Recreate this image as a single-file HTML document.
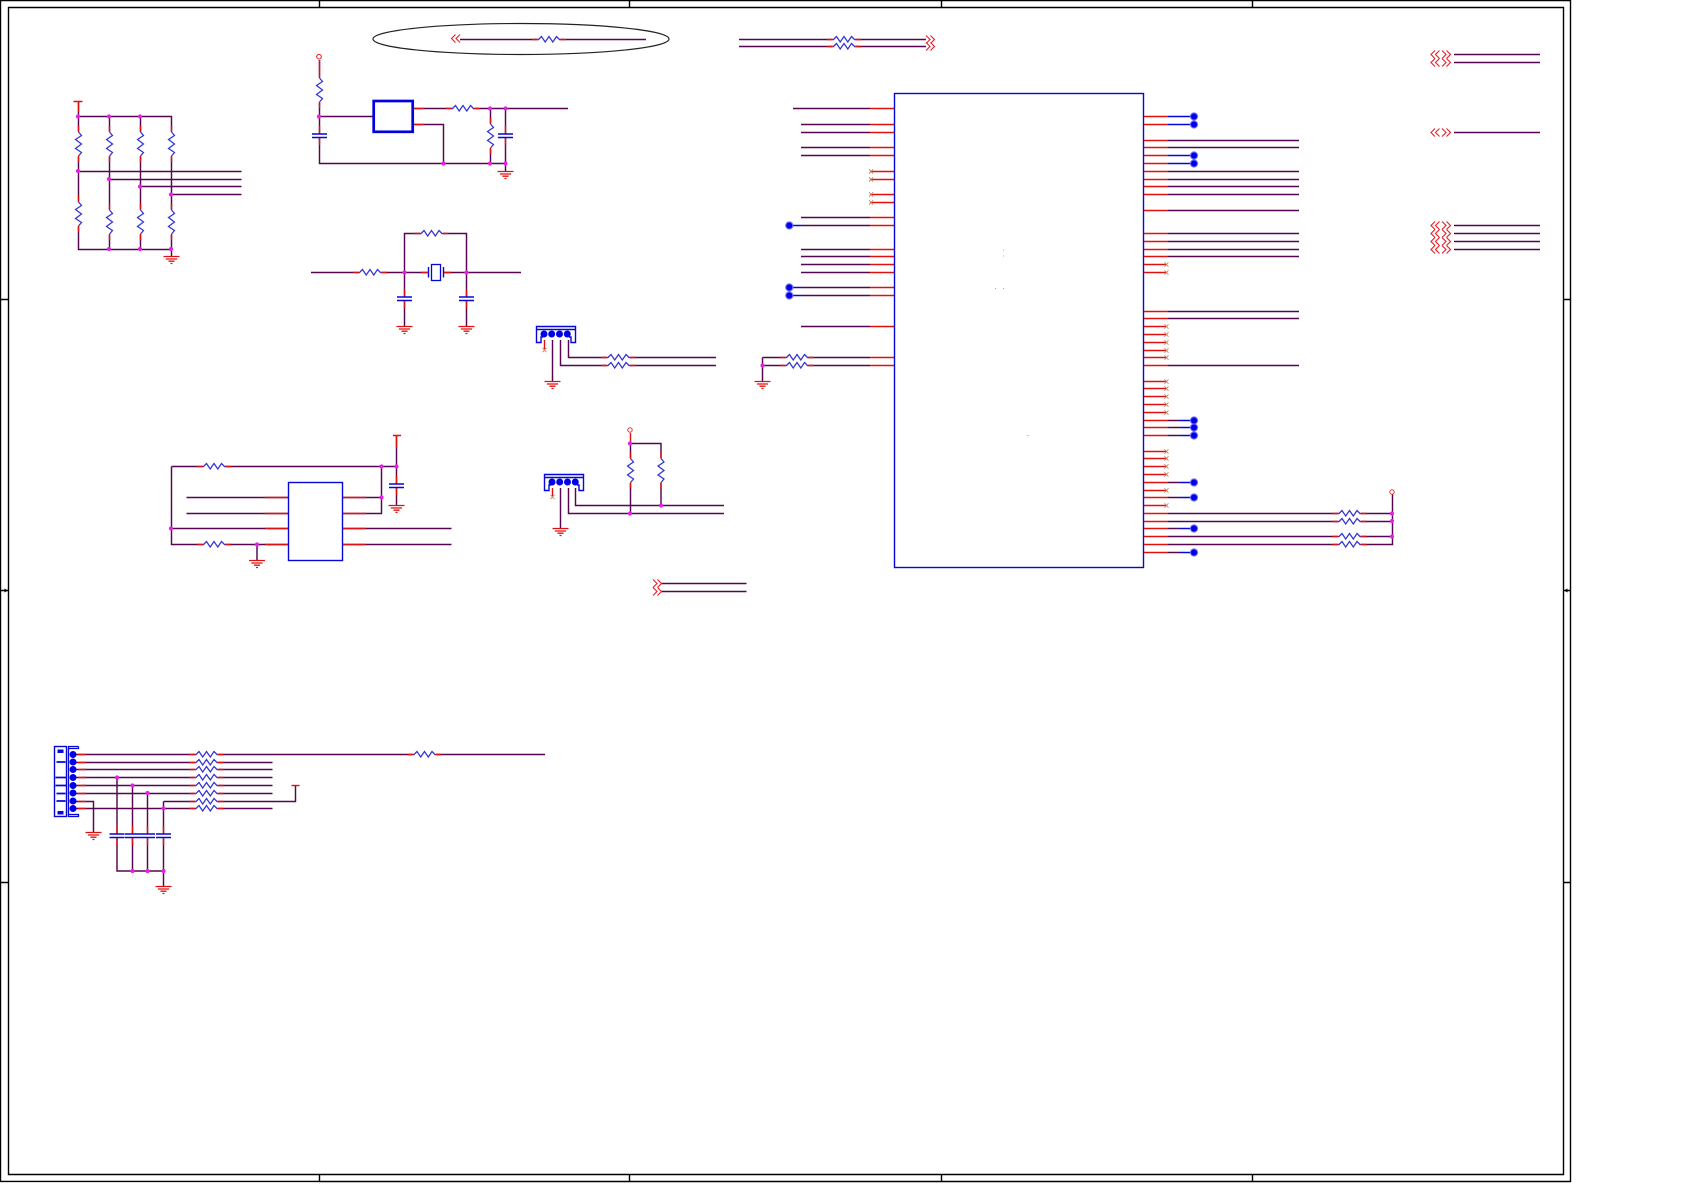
<!DOCTYPE html>
<html lang="en">
<head>
<meta charset="utf-8">
<title>Schematic</title>
<style>
html,body{margin:0;padding:0;background:#fff;width:1684px;height:1190px;overflow:hidden}
svg{display:block}
.f{fill:none;stroke:#000;stroke-width:1.4}
.w{fill:none;stroke:#560650;stroke-width:1.45}
.r{fill:none;stroke:#e01010;stroke-width:1.4}
.b{fill:none;stroke:#0606d8;stroke-width:1.4}
.z{fill:none;stroke:#3434d4;stroke-width:1.25}
.ch{fill:none;stroke:#e8242c;stroke-width:1.15}
.x{fill:none;stroke:#c08060;stroke-width:.8}
.n{fill:#e61ee6}
</style>
</head>
<body>
<svg width="1684" height="1190" viewBox="0 0 1684 1190" xmlns="http://www.w3.org/2000/svg">
<defs>
<g id="rh">
  <rect x="-.5" y="-2" width="23" height="4" fill="#fff"/>
  <path class="r" d="M-6 0H0M22 0H28"/>
  <path class="z" d="M0 .5L3.5-3L7.2 2.5L11-3L14.8 2.5L18.5-3L22 .5"/>
</g>
<g id="rv">
  <rect x="-2" y="-.5" width="4" height="25" fill="#fff"/>
  <path class="r" d="M0-6V0M0 24V30"/>
  <path class="z" d="M0 0L3 3.5L-3 7.5L3 12L-3 16.5L3 20.5L0 24"/>
</g>
<g id="cp">
  <rect x="-2" y="0" width="4" height="3.5" fill="#fff"/>
  <path class="r" d="M0-8V0M0 3.5V11"/>
  <path d="M-7.5 0H7.5M-7.5 3.5H7.5" fill="none" stroke="#0606d8" stroke-width="1.4"/>
</g>
<g id="gd">
  <path d="M-8 .5H8M-5.6 3H5.6M-3 5.2H3M-1 7.5H1" fill="none" stroke="#e01010" stroke-width="1.3"/>
</g>
<g id="al"><path class="ch" d="M4-4L0 0L4 4M8.5-4L4.5 0L8.5 4"/></g>
<g id="ar"><path class="ch" d="M0-4L4 0L0 4M4.5-4L8.5 0L4.5 4"/></g>
<g id="dt"><circle r="4.1" fill="#6a6aff"/><circle r="3" fill="#0000e6"/></g>
<g id="nx"><path class="x" d="M-2-2.2L2 2.2M-2 2.2L2-2.2"/></g>
<g id="cn">
  <path d="M.5 3.5V.5H39.5V3.5H.5M.5 3.5V16.5H5V11H7M39.5 3.500V16.500H35V11H33" fill="none" stroke="#0606d8" stroke-width="1.4"/>
  <circle cx="8" cy="8" r="3.5" fill="#0000e6"/><circle cx="15.7" cy="8" r="3.5" fill="#0000e6"/><circle cx="23.5" cy="8" r="3.5" fill="#0000e6"/><circle cx="31.3" cy="8" r="3.5" fill="#0000e6"/>
</g>
</defs>

<!-- frame -->
<path class="f" d="M.5 .5H1570.5V1181.5H.5ZM8.5 7.5H1563.5V1174.5H8.5Z"/>
<path class="f" d="M319.500 0V7.500M629.500 0V7.500M941.500 0V7.500M1252.500 0V7.500M319.500 1174.500V1181.500M629.500 1174.500V1181.500M941.500 1174.500V1181.500M1252.500 1174.500V1181.500M0 299.500H8.500M0 590.500H8.500M0 882.500H8.500M1563.500 299.500H1570.500M1563.500 590.500H1570.500M1563.500 882.500H1570.500"/>
<path d="M8 590.500L4.500 588.500V592.500ZM1564 590.500L1567.500 588.500V592.500Z" fill="#000"/>
<path d="M0 1182.500H319.500V1184" fill="none" stroke="#ddd" stroke-width="1"/>

<!-- ellipse group -->
<ellipse cx="521" cy="39" rx="148" ry="15.500" fill="none" stroke="#222" stroke-width="1.200"/>
<path class="w" d="M460 39.500H646"/>
<use href="#rh" x="538" y="39.500"/>
<use href="#al" x="451.500" y="38.500"/>
<path class="w" d="M739 39.500H926M739 46.500H926"/>
<use href="#rh" x="833" y="39.500"/><use href="#rh" x="833" y="46.500"/>
<use href="#ar" x="926" y="39.500"/><use href="#ar" x="926" y="46.500"/>

<!-- resistor dividers -->
<path class="w" d="M78.500 102V249.500H171.500V256M78.500 116.500H171.500V249.500M109.500 116.500V249.500M140.500 116.500V249.500M78.500 171.500H241.500M109.500 179.500H241.500M140.500 186.500H241.500M171.500 194.500H241.500"/>
<path class="r" d="M73.500 101.500H82.500M78.500 101.500V112"/>
<use href="#rv" x="78.500" y="132"/><use href="#rv" x="109.500" y="132"/><use href="#rv" x="140.500" y="132"/><use href="#rv" x="171.500" y="132"/>
<use href="#rv" x="78.500" y="202"/><use href="#rv" x="109.500" y="210"/><use href="#rv" x="140.500" y="210"/><use href="#rv" x="171.500" y="210"/>
<use href="#gd" x="171.500" y="256"/>
<g class="n"><circle cx="78" cy="116.500" r="2.100"/><circle cx="109" cy="116.500" r="2.100"/><circle cx="140" cy="116.500" r="2.100"/><circle cx="78" cy="171" r="2.100"/><circle cx="109" cy="179" r="2.100"/><circle cx="140" cy="186.500" r="2.100"/><circle cx="171" cy="194.500" r="2.100"/><circle cx="109" cy="249" r="2.100"/><circle cx="140" cy="249" r="2.100"/><circle cx="171" cy="249" r="2.100"/></g>

<!-- regulator -->
<path class="w" d="M319.500 60V163.500H505.500V171M319.500 116.500H373M413 108.500H568M413 124.500H443.500V163.500M490.500 108.500V163.500M505.500 108.500V163.500"/>
<path class="r" d="M319.500 60V72"/>
<circle cx="319" cy="56.700" r="2.300" fill="#fff" stroke="#e01010" stroke-width="1"/>
<rect x="373.700" y="101" width="39" height="30.800" fill="#fff" stroke="#0000e0" stroke-width="2.700"/>
<path class="r" d="M414.500 108.500H424M414.500 124.500H424"/>
<use href="#rh" x="452" y="108.500"/>
<use href="#rv" x="319.500" y="78"/>
<use href="#rv" x="490.500" y="124"/>
<use href="#cp" x="319.500" y="134"/>
<use href="#cp" x="505.500" y="134"/>
<use href="#gd" x="505.500" y="171"/>
<g class="n"><circle cx="319" cy="116.500" r="2.100"/><circle cx="490" cy="108.500" r="2.100"/><circle cx="505.500" cy="108.500" r="2.100"/><circle cx="443.500" cy="163.500" r="2.100"/><circle cx="490" cy="163.500" r="2.100"/><circle cx="505.500" cy="163.500" r="2.100"/></g>

<!-- crystal -->
<path class="w" d="M311 272.500H428M443 272.500H521M404.500 272.500V233.500H466.500V326M404.500 272.500V326"/>
<use href="#rh" x="359" y="272.500"/>
<use href="#rh" x="420.500" y="233.500"/>
<rect x="431.500" y="264.500" width="9" height="16" fill="#fff" stroke="#0606d8" stroke-width="1.300"/>
<path class="b" d="M428.500 267V277.500M443.500 267V277.500"/>
<path class="r" d="M421 272.500H428M444 272.500H451"/>
<use href="#cp" x="404.500" y="297"/><use href="#cp" x="466.500" y="297"/>
<use href="#gd" x="404.500" y="326"/><use href="#gd" x="466.500" y="326"/>
<g class="n"><circle cx="404.500" cy="272.500" r="2.100"/><circle cx="466.500" cy="272.500" r="2.100"/></g>

<!-- connector 1 -->
<path class="w" d="M568.500 340V357.500H716M560.500 340V365.500H716M552.500 340V381"/>
<path class="r" d="M544.500 340V349"/>
<use href="#nx" x="544.500" y="350"/>
<use href="#cn" x="536" y="326"/>
<use href="#rh" x="607.500" y="357.500"/><use href="#rh" x="607.500" y="365.500"/>
<use href="#gd" x="552.500" y="381"/>

<!-- IC left group -->
<path class="w" d="M793 108.500H870M801 124.500H870M801 132.500H870M801 147.500H870M801 155.500H870M801 217.500H870M801 225.500H870M801 249.500H870M801 256.500H870M801 264.500H870M801 272.500H870M801 287.500H870M801 295.500H870M801 326.500H870M762.500 357.500H870M762.500 365.500H870M762.500 357.500V381"/>
<path class="b" d="M789 225.500H801M789 287.500H801M789 295.500H801"/>
<path class="r" d="M870 108.500H894M870 124.500H894M870 132.500H894M870 147.500H894M870 155.500H894M870 171.500H894M870 179.500H894M870 194.500H894M870 202.500H894M870 217.500H894M870 225.500H894M870 249.500H894M870 256.500H894M870 264.500H894M870 272.500H894M870 287.500H894M870 295.500H894M870 326.500H894M870 357.500H894M870 365.500H894"/>
<use href="#nx" x="871" y="171.500"/><use href="#nx" x="871" y="179.500"/><use href="#nx" x="871" y="194.500"/><use href="#nx" x="871" y="202.500"/>
<use href="#dt" x="789.300" y="225.500"/><use href="#dt" x="789.300" y="287.500"/><use href="#dt" x="789.300" y="295.500"/>
<use href="#rh" x="786" y="357.500"/><use href="#rh" x="786" y="365.500"/>
<use href="#gd" x="762.500" y="381"/>
<circle class="n" cx="762.500" cy="365.500" r="2.100"/>

<!-- IC body -->
<rect x="894.500" y="93.500" width="249" height="474" fill="none" stroke="#0606d8" stroke-width="1.400"/>
<path d="M1003.500 249.500v1M1003.500 255.500v1M995.500 288v1M1003.500 288v1M1027 435.500h1.500" stroke="#999" stroke-width=".8" fill="none"/>

<!-- IC right group -->
<path class="w" d="M1168 140.500H1299M1168 147.500H1299M1168 171.500H1299M1168 179.500H1299M1168 186.500H1299M1168 194.500H1299M1168 210.500H1299M1168 233.500H1299M1168 241.500H1299M1168 249.500H1299M1168 256.500H1299M1168 311.500H1299M1168 318.500H1299M1168 365.500H1299M1168 513.500H1392.500M1168 521.500H1392.500M1168 536.500H1392.500M1168 544.500H1392.500V492"/>
<path class="w" d="M1168 420.500H1180M1168 427.500H1180M1168 435.500H1180M1168 482.500H1180M1168 497.500H1180M1168 528.500H1180M1168 552.500H1180"/>
<path class="b" d="M1168 116.500H1194M1168 124.500H1194M1168 155.500H1194M1168 163.500H1194M1180 420.500H1194M1180 427.500H1194M1180 435.500H1194M1180 482.500H1194M1180 497.500H1194M1180 528.500H1194M1180 552.500H1194"/>
<path class="r" d="M1144 116.500H1168M1144 124.500H1168M1144 140.500H1168M1144 147.500H1168M1144 155.500H1168M1144 163.500H1168M1144 171.500H1168M1144 179.500H1168M1144 186.500H1168M1144 194.500H1168M1144 210.500H1168M1144 233.500H1168M1144 241.500H1168M1144 249.500H1168M1144 256.500H1168M1144 264.500H1166M1144 272.500H1166M1144 311.500H1168M1144 318.500H1168M1144 326.500H1166M1144 334.500H1166M1144 342.500H1166M1144 350.500H1166M1144 357.500H1166M1144 365.500H1168M1144 381.500H1166M1144 388.500H1166M1144 396.500H1166M1144 404.500H1166M1144 412.500H1166M1144 420.500H1168M1144 427.500H1168M1144 435.500H1168M1144 451.500H1166M1144 458.500H1166M1144 466.500H1166M1144 474.500H1166M1144 482.500H1168M1144 490.500H1166M1144 497.500H1168M1144 505.500H1166M1144 513.500H1168M1144 521.500H1168M1144 528.500H1168M1144 536.500H1168M1144 544.500H1168M1144 552.500H1168"/>
<use href="#nx" x="1166.500" y="264.500"/><use href="#nx" x="1166.500" y="272.500"/><use href="#nx" x="1166.500" y="326.500"/><use href="#nx" x="1166.500" y="334.500"/><use href="#nx" x="1166.500" y="342.500"/><use href="#nx" x="1166.500" y="350.500"/><use href="#nx" x="1166.500" y="357.500"/><use href="#nx" x="1166.500" y="381.500"/><use href="#nx" x="1166.500" y="388.500"/><use href="#nx" x="1166.500" y="396.500"/><use href="#nx" x="1166.500" y="404.500"/><use href="#nx" x="1166.500" y="412.500"/><use href="#nx" x="1166.500" y="451.500"/><use href="#nx" x="1166.500" y="458.500"/><use href="#nx" x="1166.500" y="466.500"/><use href="#nx" x="1166.500" y="474.500"/><use href="#nx" x="1166.500" y="490.500"/><use href="#nx" x="1166.500" y="505.500"/>
<use href="#dt" x="1194" y="116.500"/><use href="#dt" x="1194" y="124.500"/><use href="#dt" x="1194" y="155.500"/><use href="#dt" x="1194" y="163.500"/><use href="#dt" x="1194" y="420.500"/><use href="#dt" x="1194" y="427.500"/><use href="#dt" x="1194" y="435.500"/><use href="#dt" x="1194" y="482.500"/><use href="#dt" x="1194" y="497.500"/><use href="#dt" x="1194" y="528.500"/><use href="#dt" x="1194" y="552.500"/>
<use href="#rh" x="1338.500" y="513.500"/><use href="#rh" x="1338.500" y="521.500"/><use href="#rh" x="1338.500" y="536.500"/><use href="#rh" x="1338.500" y="544.500"/>
<circle cx="1392" cy="492" r="2.200" fill="#fff" stroke="#e8343c" stroke-width="1"/>
<g class="n"><circle cx="1392" cy="513.500" r="2.100"/><circle cx="1392" cy="521" r="2.100"/><circle cx="1392" cy="536.500" r="2.100"/></g>

<!-- far-right connectors -->
<path class="w" d="M1454 54.500H1540M1454 62.500H1540M1454 132.500H1540M1454 225.500H1540M1454 233.500H1540M1454 241.500H1540M1454 249.500H1540"/>
<use href="#al" x="1431" y="54.500"/><use href="#al" x="1431" y="62.500"/><use href="#ar" x="1442" y="54.500"/><use href="#ar" x="1442" y="62.500"/>
<use href="#al" x="1431" y="132.500"/><use href="#ar" x="1442" y="132.500"/>
<use href="#al" x="1431" y="225.500"/><use href="#al" x="1431" y="233.500"/><use href="#al" x="1431" y="241.500"/><use href="#al" x="1431" y="249.500"/>
<use href="#ar" x="1442" y="225.500"/><use href="#ar" x="1442" y="233.500"/><use href="#ar" x="1442" y="241.500"/><use href="#ar" x="1442" y="249.500"/>

<!-- U block -->
<path class="w" d="M171.500 466.500H396.500M396.500 436V505M381.500 466.500V513.500H342.500M381.500 497.500H342.500M171.500 466.500V544.500H288M171.500 528.500H288M186.500 497.500H288M186.500 513.500H288M342.500 528.500H451.500M342.500 544.500H451.500M257 544.500V560"/>
<path class="r" d="M393 435.500H401M396.500 435.500V448M265 544.500H288M265 528.500H288M265 513.500H288M265 497.500H288M343 497.500H366M343 513.500H366M343 528.500H366M343 544.500H366"/>
<rect x="288.500" y="482.500" width="54" height="78" fill="#fff" stroke="#0606d8" stroke-width="1.400"/>
<use href="#rh" x="203" y="466.500"/><use href="#rh" x="203" y="544.500"/>
<use href="#cp" x="396.500" y="484"/>
<use href="#gd" x="396.500" y="505"/><use href="#gd" x="257" y="560"/>
<g class="n"><circle cx="171" cy="528.500" r="2.100"/><circle cx="381.500" cy="466.500" r="2.100"/><circle cx="396.500" cy="466.500" r="2.100"/><circle cx="381.500" cy="497.500" r="2.100"/><circle cx="257" cy="544.500" r="2.100"/></g>

<!-- connector 2 -->
<path class="w" d="M575.500 488V505.500H724M568.500 488V513.500H724M560.500 488V528M630.500 443.500V513.500M630.500 443.500H661V505.500"/>
<path class="r" d="M552.500 488V496M630.500 433V443"/>
<use href="#nx" x="552.500" y="497"/>
<use href="#cn" x="544" y="474"/>
<use href="#rv" x="630.500" y="458.500"/><use href="#rv" x="661" y="458.500"/>
<circle cx="630" cy="430" r="2.200" fill="#fff" stroke="#e8343c" stroke-width="1"/>
<use href="#gd" x="560.500" y="528"/>
<g class="n"><circle cx="630" cy="443.500" r="2.100"/><circle cx="630" cy="513.500" r="2.100"/><circle cx="661" cy="505.500" r="2.100"/></g>

<!-- arrows below -->
<path class="w" d="M661 583.500H746.500M661 591.500H746.500"/>
<use href="#ar" x="653" y="583.500"/><use href="#ar" x="653" y="591.500"/>

<!-- bottom connector -->
<path class="w" d="M73 754.500H545M73 762.500H272.500M73 769.500H272.500M73 777.500H272.500M73 785.500H272.500M73 793.500H272.500M73 808.500H272.500M73 801.500H93.500V832M163.500 801.500H295.500V785.500M117 777.500V871H163.500M132.500 785.500V871M147.500 793.500V871M163.500 801.500V886"/>
<path class="r" d="M291.500 785.500H299.500"/>
<path class="r" d="M78 754.500H86M78 762.500H86M78 769.500H86M78 777.500H86M78 785.500H86M78 793.500H86M78 801.500H86M78 808.500H86"/>
<use href="#rh" x="195.500" y="754.500"/><use href="#rh" x="195.500" y="762.500"/><use href="#rh" x="195.500" y="769.500"/><use href="#rh" x="195.500" y="777.500"/><use href="#rh" x="195.500" y="785.500"/><use href="#rh" x="195.500" y="793.500"/><use href="#rh" x="195.500" y="801.500"/><use href="#rh" x="195.500" y="808.500"/>
<use href="#rh" x="413.500" y="754.500"/>
<use href="#cp" x="117" y="834"/><use href="#cp" x="132.500" y="834"/><use href="#cp" x="147.500" y="834"/><use href="#cp" x="163.500" y="834"/>
<use href="#gd" x="93.500" y="832"/><use href="#gd" x="163.500" y="886"/>
<g class="n"><circle cx="117" cy="777.500" r="2.100"/><circle cx="132.500" cy="785.500" r="2.100"/><circle cx="147.500" cy="793" r="2.100"/><circle cx="163.500" cy="808.500" r="2.100"/><circle cx="132.500" cy="871" r="2.100"/><circle cx="147.500" cy="871" r="2.100"/><circle cx="163.500" cy="871" r="2.100"/></g>
<rect x="54.500" y="746.500" width="12" height="70" fill="#fff" stroke="#0606d8" stroke-width="1.400"/>
<rect x="57.500" y="749.500" width="6" height="3.500" fill="#0606d8"/>
<rect x="57.500" y="811" width="6" height="3.500" fill="#0606d8"/>
<path d="M56.500 762H65.500M55.500 777.500H66.500M55.500 785.500H66.500M56.500 793.500H65.500M56.500 801H65.500" fill="none" stroke="#0606d8" stroke-width="1.800"/>
<path d="M78.500 746.500H68.500V816.500H78.500V814.500H69M78.500 746.500V748.500H69" fill="none" stroke="#0606d8" stroke-width="1.300"/>
<g fill="#0000e6"><circle cx="73" cy="754.500" r="3.500"/><circle cx="73" cy="762" r="3.500"/><circle cx="73" cy="769.500" r="3.500"/><circle cx="73" cy="777.500" r="3.500"/><circle cx="73" cy="785.500" r="3.500"/><circle cx="73" cy="793" r="3.500"/><circle cx="73" cy="801" r="3.500"/><circle cx="73" cy="808.500" r="3.500"/></g>
</svg>
</body>
</html>
